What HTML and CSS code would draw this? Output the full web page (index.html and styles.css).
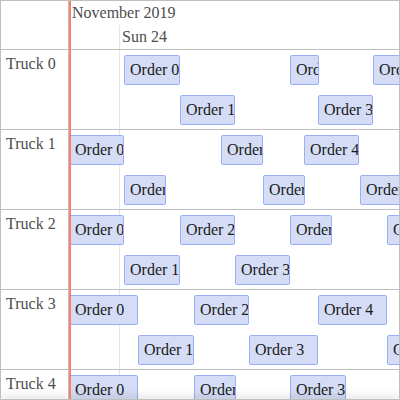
FILE: index.html
```html
<!DOCTYPE html>
<html>
<head>
<meta charset="utf-8">
<link rel="stylesheet" href="styles.css">
</head>
<body>
<div class="timeline">
  <div class="left">
    <div class="corner"></div>
    <div class="label">Truck 0</div>
    <div class="label">Truck 1</div>
    <div class="label">Truck 2</div>
    <div class="label">Truck 3</div>
    <div class="label">Truck 4</div>
    <div class="shadow"></div>
  </div>
  <div class="center">
    <div class="grid-minor"></div>
    <div class="axis">
      <div class="major">November 2019</div>
      <div class="minor">Sun 24</div>
    </div>
    <div class="row">
      <div class="item l1" style="left:55px;width:56px">Order 0</div>
      <div class="item l2" style="left:111px;width:55px">Order 1</div>
      <div class="item l1" style="left:221px;width:29px">Order 2</div>
      <div class="item l2" style="left:249px;width:55px">Order 3</div>
      <div class="item l1" style="left:304px;width:60px">Order 4</div>
    </div>
    <div class="row">
      <div class="item l1" style="left:0px;width:55px">Order 0</div>
      <div class="item l2" style="left:55px;width:42px">Order 1</div>
      <div class="item l1" style="left:152px;width:42px">Order 2</div>
      <div class="item l2" style="left:194px;width:42px">Order 3</div>
      <div class="item l1" style="left:235px;width:55px">Order 4</div>
      <div class="item l2" style="left:291px;width:60px">Order 5</div>
    </div>
    <div class="row">
      <div class="item l1" style="left:0px;width:55px">Order 0</div>
      <div class="item l2" style="left:55px;width:56px">Order 1</div>
      <div class="item l1" style="left:111px;width:55px">Order 2</div>
      <div class="item l2" style="left:166px;width:55px">Order 3</div>
      <div class="item l1" style="left:221px;width:42px">Order 4</div>
      <div class="item l1" style="left:318px;width:60px">Order 5</div>
    </div>
    <div class="row">
      <div class="item l1" style="left:0px;width:69px">Order 0</div>
      <div class="item l2" style="left:69px;width:56px">Order 1</div>
      <div class="item l1" style="left:125px;width:55px">Order 2</div>
      <div class="item l2" style="left:180px;width:69px">Order 3</div>
      <div class="item l1" style="left:249px;width:69px">Order 4</div>
      <div class="item l2" style="left:318px;width:60px">Order 5</div>
    </div>
    <div class="row">
      <div class="item l1" style="left:0px;width:69px">Order 0</div>
      <div class="item l2" style="left:69px;width:55px">Order 1</div>
      <div class="item l1" style="left:125px;width:42px">Order 2</div>
      <div class="item l1" style="left:221px;width:56px">Order 3</div>
    </div>
    <div class="now"></div>
    <div class="shadow"></div>
  </div>
</div>
</body>
</html>
```

FILE: styles.css
```css
* {
  box-sizing: border-box;
}

body {
  margin: 0;
  font-family: "Liberation Serif", serif;
  font-size: 16px;
}

.timeline {
  width: 400px;
  height: 400px;
  border: 1px solid #bfbfbf;
  display: flex;
  overflow: hidden;
}

.left {
  flex: none;
  width: 68px;
  border-right: 1px solid #bfbfbf;
  position: relative;
  overflow: hidden;
}

.corner {
  height: 49px;
  border-bottom: 1px solid #bfbfbf;
}

.label {
  height: 80px;
  border-bottom: 1px solid #bfbfbf;
  padding: 5px;
  color: #4d4d4d;
  white-space: nowrap;
}

.center {
  flex: 1;
  position: relative;
  overflow: hidden;
}

.grid-minor {
  position: absolute;
  left: 50px;
  top: 24px;
  bottom: 0;
  width: 1px;
  background: #e5e5e5;
}

.axis {
  position: relative;
  height: 49px;
  border-bottom: 1px solid #bfbfbf;
  color: #4d4d4d;
}

.major {
  height: 24px;
  padding: 3px;
  white-space: nowrap;
}

.minor {
  position: absolute;
  left: 50px;
  top: 24px;
  padding: 3px;
  white-space: nowrap;
}

.row {
  position: relative;
  height: 80px;
  border-bottom: 1px solid #bfbfbf;
}

.item {
  position: absolute;
  height: 30px;
  padding: 5px;
  background: #d5ddf6;
  border: 1px solid #97b0f8;
  border-radius: 2px;
  color: #1a1a1a;
  white-space: nowrap;
  overflow: hidden;
}

.l1 {
  top: 5px;
}

.l2 {
  top: 45px;
}

.now {
  position: absolute;
  left: 0;
  top: 0;
  bottom: 0;
  width: 2px;
  background: #ff7f6e;
  z-index: 2;
}

.shadow {
  position: absolute;
  left: 0;
  right: 0;
  bottom: -1px;
  height: 1px;
  box-shadow: 0 0 10px rgba(0, 0, 0, 0.8);
  z-index: 3;
}
```
